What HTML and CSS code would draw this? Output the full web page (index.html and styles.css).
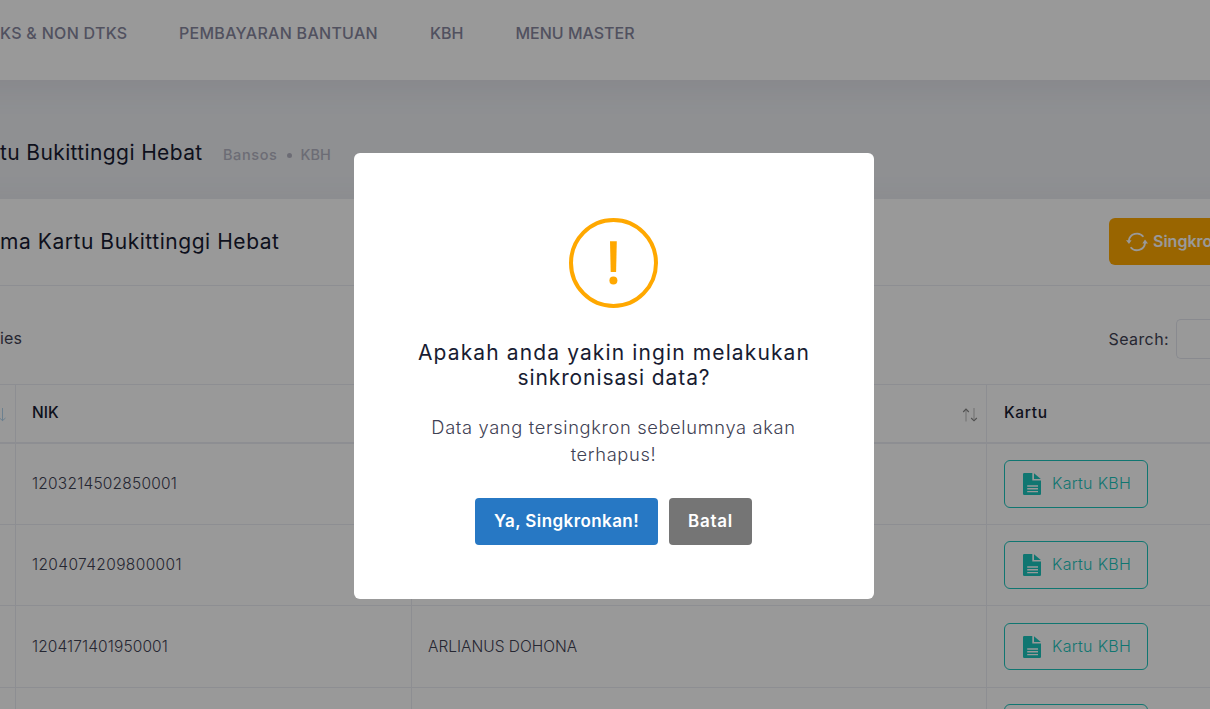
FILE: index.html
```html
<!DOCTYPE html>
<html lang="id">
<head>
<meta charset="utf-8">
<title>Kartu Bukittinggi Hebat</title>
<link rel="stylesheet" href="styles.css">
</head>
<body>
<svg width="0" height="0" class="defs">
  <symbol id="doc" viewBox="0 0 18 22">
    <path d="M1.2 0H9.3V7.6H18V20.8A1.2 1.2 0 0 1 16.8 22H1.2A1.2 1.2 0 0 1 0 20.8V1.2A1.2 1.2 0 0 1 1.2 0ZM4.2 12.3V13.7H15V12.3ZM4.2 15.1V16.5H15V15.1ZM4.2 17.9V19.2H15V17.9Z" fill-rule="evenodd"/>
    <path d="M11 0.3L17.8 6H11Z"/>
  </symbol>
</svg>
<div class="page">
<nav class="topbar">
  <a class="nav-first">KS &amp; NON DTKS</a>
  <a class="nav-pay">PEMBAYARAN BANTUAN</a>
  <a>KBH</a>
  <a>MENU MASTER</a>
</nav>
<header class="subheader">
  <h1>tu Bukittinggi Hebat</h1>
  <div class="crumbs"><span class="crumb-a">Bansos</span><i></i><span>KBH</span></div>
</header>
<main class="card">
  <div class="card-header">
    <h2>ma Kartu Bukittinggi Hebat</h2>
    <button class="btn-sync">
      <svg width="22" height="20" viewBox="0 0 22 20" fill="none" stroke="currentColor" stroke-width="1.8">
        <path d="M2.8 8.8A8.2 8.2 0 0 1 17.4 4.8M19.1 10.8A8.2 8.2 0 0 1 4.6 15.2"/>
        <path d="M0 8.2H5.6L3 12ZM16.3 11.4H22L19 7.6Z" fill="currentColor" stroke="none"/>
      </svg>
      <span>Singkro</span>
    </button>
  </div>
  <div class="tools">
    <span class="entries">ies</span>
    <label>Search:</label><div class="field"></div>
  </div>
  <div class="table">
    <div class="row head">
      <div class="c0"><svg width="8" height="14" viewBox="0 0 8 14" fill="none" stroke="#b5d5ee"><path d="M4.5 0V13M1.5 10L4.5 12.6L7.5 10"/></svg></div>
      <div>NIK</div>
      <div class="sortcell"><svg width="16" height="14" viewBox="0 0 16 14" fill="none" stroke="#c0c0c0" stroke-width="1.1"><path d="M4 13.5V1M12 0V13"/><path d="M1.2 4L4 1L6.8 4M9.2 10L12 12.8L14.8 10" stroke="#858585"/></svg></div>
      <div class="kartu">Kartu</div>
    </div>
    <div class="row"><div></div><div class="n1">1203214502850001</div><div></div><div><a class="btn-card"><svg width="18" height="22"><use href="#doc"/></svg><span>Kartu KBH</span></a></div></div>
    <div class="row"><div></div><div class="n2">1204074209800001</div><div></div><div><a class="btn-card"><svg width="18" height="22"><use href="#doc"/></svg><span>Kartu KBH</span></a></div></div>
    <div class="row tall"><div></div><div class="n3">1204171401950001</div><div>ARLIANUS DOHONA</div><div><a class="btn-card"><svg width="18" height="22"><use href="#doc"/></svg><span>Kartu KBH</span></a></div></div>
    <div class="row last"><div></div><div></div><div></div><div><a class="btn-card"></a></div></div>
  </div>
</main>
</div>
<div class="overlay">
  <section class="dialog">
    <svg class="warn" width="89" height="90" viewBox="0 0 89 90">
      <ellipse cx="44.5" cy="45" rx="42.5" ry="43" fill="none" stroke="#ffa800" stroke-width="4"/>
      <path d="M41 23.3H47.8L47.1 54H41.7Z" fill="#ffa800"/>
      <circle cx="44.4" cy="62.5" r="4" fill="#ffa800"/>
    </svg>
    <h3><span class="t1">Apakah anda yakin ingin melakukan</span><br><span class="t2">sinkronisasi data?</span></h3>
    <p>Data yang tersingkron sebelumnya akan<br>terhapus!</p>
    <div class="actions">
      <button class="confirm">Ya, Singkronkan!</button>
      <button class="cancel">Batal</button>
    </div>
  </section>
</div>
</body>
</html>
```
FILE: styles.css
```css
* { box-sizing: border-box; }
body {
  margin: 0;
  font-family: Inter, "Open Sans", sans-serif;
  color: #3f4254;
}
h1, h2, h3, p { margin: 0; }
button { border: 0; font-family: inherit; }
.defs { display: block; }
.page {
  height: 709px;
  display: flex;
  flex-direction: column;
  overflow: hidden;
  background: #eef0f4;
}

.topbar {
  flex: none;
  height: 80px;
  margin: 0 -60px;
  padding: 0 60px;
  display: flex;
  gap: 52px;
  background: #fff;
  box-shadow: 0 10px 30px rgba(82, 63, 105, 0.08);
  font-size: 16px;
  font-weight: 500;
  line-height: 67px;
  color: #88889f;
  white-space: nowrap;
}
.nav-first { width: 127px; letter-spacing: 0.3px; }
.nav-pay { width: 199px; letter-spacing: 0.28px; }

.subheader {
  flex: none;
  height: 119px;
  padding-top: 55px;
  display: flex;
  align-items: flex-start;
  gap: 20px;
}
.subheader h1 {
  width: 203px;
  font-size: 21px;
  font-weight: 400;
  line-height: 36px;
  letter-spacing: 0.38px;
  white-space: nowrap;
  color: #181c32;
}
.crumbs {
  display: flex;
  align-items: center;
  font-size: 14.5px;
  font-weight: 500;
  line-height: 39px;
  color: #b5b5c3;
}
.crumb-a { letter-spacing: 0.6px; }
.crumbs i {
  width: 5px;
  height: 5px;
  margin: 2px 8px 0 10px;
  border-radius: 50%;
  background: #b5b5c3;
}

.card {
  flex: 1;
  min-height: 0;
  margin: 0 -60px;
  padding: 0 60px;
  background: #fff;
  box-shadow: 0 0 30px rgba(82, 63, 105, 0.05);
}
.card-header {
  height: 87px;
  display: flex;
  justify-content: space-between;
  border-bottom: 1px solid #ebedf3;
}
.card-header h2 {
  font-size: 21px;
  font-weight: 400;
  line-height: 85px;
  letter-spacing: 0.55px;
  white-space: nowrap;
  color: #181c32;
}
.btn-sync {
  width: 101px;
  height: 47px;
  margin-top: 19px;
  padding: 0 0 0 17px;
  display: flex;
  align-items: center;
  gap: 5px;
  border-radius: 6px 0 0 6px;
  background: #ffa800;
  color: #fff;
  font-size: 16px;
  font-weight: 600;
}
.btn-sync svg { flex: none; margin-top: 1px; }
.btn-sync span { padding-bottom: 1px; }
.tools {
  height: 98px;
  padding-top: 33px;
  display: flex;
  font-size: 16px;
  line-height: 40px;
}
.entries { flex: 1; margin-top: -1px; letter-spacing: 0.1px; }
.tools label { width: 67.5px; letter-spacing: 0.4px; }
.field {
  width: 34px;
  height: 40px;
  border: 1px solid #e4e6ef;
  border-right: 0;
  border-radius: 5px 0 0 5px;
}

.table { border-top: 1px solid #ebedf3; }
.row {
  height: 81px;
  display: grid;
  grid-template-columns: 16px 396px 575px 1fr;
  border-bottom: 1px solid #ebedf3;
  font-size: 15.5px;
  font-weight: 300;
  line-height: 79px;
}
.row > div { padding-left: 16px; border-right: 1px solid #ebedf3; }
.row > div:first-child { padding-left: 0; }
.row > div:last-child { padding-left: 17px; border-right: 0; }
.row.tall { height: 82px; line-height: 81px; }
.row.last { height: 21px; border-bottom: 0; overflow: hidden; }
.row.head {
  height: 59px;
  border-bottom-width: 2px;
  font-weight: 500;
  line-height: 56px;
  color: #181c32;
}
.c0 svg { display: block; margin: 23px 0 0 -2px; }
.row > .sortcell { display: flex; justify-content: flex-end; padding: 23px 8px 0 0; }
.kartu { letter-spacing: 0.7px; }
.n1 { letter-spacing: 0.21px; }
.n2 { letter-spacing: 0.37px; }
.n3 { letter-spacing: 0.1px; }
.btn-card {
  width: 144px;
  height: 48px;
  margin-top: 16px;
  padding-left: 18px;
  display: flex;
  align-items: center;
  gap: 11px;
  border: 1px solid #1bc5bd;
  border-radius: 6px;
  color: #1bc5bd;
  font-size: 16px;
  letter-spacing: 0.3px;
  line-height: 44px;
}
.btn-card span { padding-bottom: 2px; }
.btn-card svg { fill: #1bc5bd; }
.tall .btn-card { height: 47px; margin-top: 17px; }
.last .btn-card { margin-bottom: -60px; }

.overlay {
  position: fixed;
  inset: 0;
  padding: 153px 0 0 354px;
  background: rgba(0, 0, 0, 0.4);
}
.dialog {
  width: 520px;
  height: 446px;
  padding-top: 65px;
  display: flex;
  flex-direction: column;
  align-items: center;
  border-radius: 6px;
  background: #fff;
  text-align: center;
  white-space: nowrap;
}
.warn { margin-right: 1px; }
.dialog h3 {
  margin-top: 32px;
  font-size: 21px;
  font-weight: 400;
  line-height: 25px;
  color: #181c32;
}
.t1 { letter-spacing: 1.12px; }
.t2 { letter-spacing: 0.9px; }
.dialog p {
  margin: 24px 1px 0 0;
  font-size: 18.3px;
  font-weight: 300;
  line-height: 27px;
  letter-spacing: 0.65px;
}
.actions { margin: 30px 1px 0 0; display: flex; gap: 11px; }
.actions button {
  height: 47px;
  padding: 0 0 2px;
  border-radius: 4px;
  color: #fff;
  font-size: 17px;
  font-weight: 600;
}
.confirm { width: 183px; background: #2778c4; letter-spacing: 0.42px; }
.cancel { width: 83px; background: #757575; letter-spacing: 0.7px; }
```
